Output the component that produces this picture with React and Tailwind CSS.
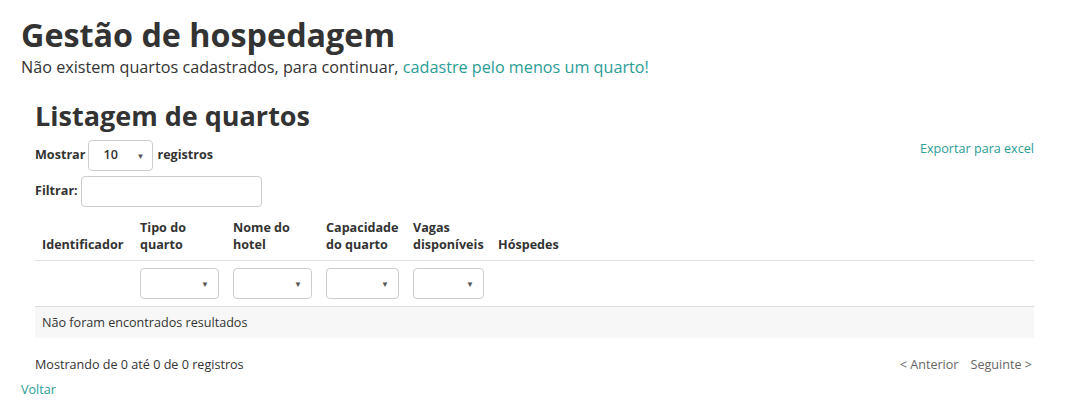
import React from "react";

const Caret = () => (
  <span className="text-[8px] text-[#555] leading-none">▼</span>
);

const Sel = ({ w }) => (
  <div className={`${w} h-[31px] border border-[#ccc] rounded-[4px] bg-white flex items-center justify-end pr-[9px]`}>
    <Caret />
  </div>
);

export default function App() {
  return (
    <div className="bg-white w-[1074px] h-[408px] px-[21px] text-[#333] overflow-hidden" style={{ fontFamily: '"Open Sans", sans-serif' }}>
      <h1 className="text-[32.3px] font-bold leading-[36px] pt-[16px]">Gestão de hospedagem</h1>
      <p className="text-[16.2px] leading-[22px] mt-[4px]">
        Não existem quartos cadastrados, para continuar,{" "}
        <span className="text-[#2a9d96]">cadastre pelo menos um quarto!</span>
      </p>
      <div className="ml-[14px] w-[999px] mt-[20px]">
        <h2 className="text-[27px] font-bold leading-[36px]">Listagem de quartos</h2>
        <div className="flex justify-between items-start mt-[6px]">
          <div className="flex items-center text-[12.6px] font-bold">
            <span>Mostrar</span>
            <div className="ml-[3px] mr-[4px] w-[65px] h-[31px] border border-[#ccc] rounded-[4px] flex items-center justify-between pl-[14px] pr-[8px] font-semibold">
              <span>10</span>
              <Caret />
            </div>
            <span>registros</span>
          </div>
          <span className="text-[12.6px] text-[#2a9d96]">Exportar para excel</span>
        </div>
        <div className="flex items-center gap-[3px] text-[12.6px] font-bold mt-[5px]">
          <span>Filtrar:</span>
          <div className="w-[181px] h-[31px] border border-[#ccc] rounded-[4px]"></div>
        </div>
        <div className="mt-[12px] text-[12.6px]">
          <div className="flex items-end font-bold leading-[17px] pb-[7px] border-b border-[#ddd]">
            <div className="w-[98px] px-[7px]">Identificador</div>
            <div className="w-[93px] px-[7px]">Tipo do<br />quarto</div>
            <div className="w-[93px] px-[7px]">Nome do<br />hotel</div>
            <div className="w-[87px] px-[7px]">Capacidade<br />do quarto</div>
            <div className="w-[85px] px-[7px]">Vagas<br />disponíveis</div>
            <div className="px-[7px]">Hóspedes</div>
          </div>
          <div className="flex items-center h-[46px] border-b border-[#ddd]">
            <div className="w-[98px]"></div>
            <div className="w-[93px] px-[7px]"><Sel w="w-[79px]" /></div>
            <div className="w-[93px] px-[7px]"><Sel w="w-[79px]" /></div>
            <div className="w-[87px] px-[7px]"><Sel w="w-[73px]" /></div>
            <div className="w-[85px] px-[7px]"><Sel w="w-[71px]" /></div>
          </div>
          <div className="bg-[#f7f7f7] h-[31px] flex items-center px-[7px] pt-[1px]">Não foram encontrados resultados</div>
          <div className="flex justify-between items-center mt-[18px]">
            <span>Mostrando de 0 até 0 de 0 registros</span>
            <div className="flex gap-[12px] text-[#666] pr-[2px]">
              <span>&lt; Anterior</span>
              <span>Seguinte &gt;</span>
            </div>
          </div>
        </div>
      </div>
      <div className="text-[12.6px] text-[#2a9d96] mt-[6px]">Voltar</div>
    </div>
  );
}
